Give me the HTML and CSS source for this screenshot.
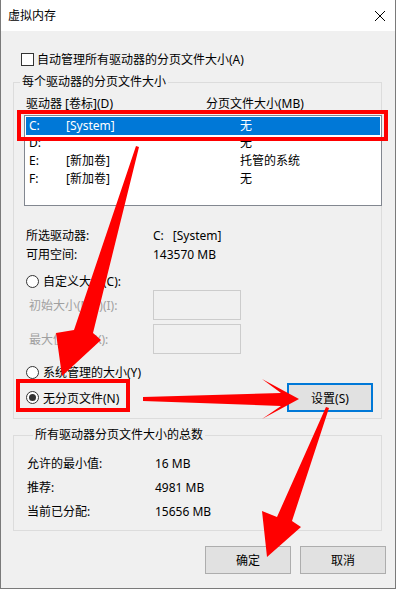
FILE: index.html
```html
<!DOCTYPE html>
<html lang="zh-CN">
<head>
<meta charset="utf-8">
<title>虚拟内存</title>
<link rel="stylesheet" href="styles.css">
</head>
<body>
<div class="window">
  <div class="titlebar">
    <span class="title">虚拟内存</span>
    <svg class="close" width="12" height="12" viewBox="0 0 12 12"><path d="M1 1L11 11M11 1L1 11" stroke="#000" stroke-width="1" fill="none"/></svg>
  </div>
  <div class="content">
    <div class="check-row"><span class="checkbox"></span><span>自动管理所有驱动器的分页文件大小(A)</span></div>

    <fieldset class="group group-drives">
      <legend>每个驱动器的分页文件大小</legend>
      <div class="list-header"><span class="hcol">驱动器 [卷标](D)</span><span>分页文件大小(MB)</span></div>
      <div class="listbox">
        <div class="lrow selected"><span class="c1">C:</span><span class="c2">[System]</span><span>无</span></div>
        <div class="lrow"><span class="c1">D:</span><span class="c2"></span><span>无</span></div>
        <div class="lrow"><span class="c1">E:</span><span class="c2">[新加卷]</span><span>托管的系统</span></div>
        <div class="lrow"><span class="c1">F:</span><span class="c2">[新加卷]</span><span>无</span></div>
      </div>
      <div class="info first"><span class="info-label">所选驱动器:</span><span>C:</span><span class="vol">[System]</span></div>
      <div class="info second"><span class="info-label">可用空间:</span><span>143570 MB</span></div>

      <div class="radio-row custom"><span class="radio"></span><span>自定义大小(C):</span></div>
      <div class="field-row"><span class="field-label">初始大小(MB)(I):</span><span class="field"></span></div>
      <div class="field-row second-field"><span class="field-label">最大值(MB)(X):</span><span class="field"></span></div>
      <div class="radio-row system"><span class="radio"></span><span>系统管理的大小(Y)</span></div>
      <div class="set-row"><span class="radio checked"></span><span>无分页文件(N)</span><span class="btn btn-focus">设置(S)</span></div>
    </fieldset>

    <fieldset class="group group-total">
      <legend>所有驱动器分页文件大小的总数</legend>
      <div class="trow"><span class="tlabel">允许的最小值:</span><span>16 MB</span></div>
      <div class="trow"><span class="tlabel">推荐:</span><span>4981 MB</span></div>
      <div class="trow"><span class="tlabel">当前已分配:</span><span>15656 MB</span></div>
    </fieldset>

    <div class="buttons"><span class="btn">确定</span><span class="btn">取消</span></div>
  </div>
</div>
<svg class="annot" width="396" height="589" viewBox="0 0 396 589">
  <rect x="19" y="112" width="367" height="27" fill="none" stroke="#ff0000" stroke-width="4"/>
  <rect x="18" y="381" width="110" height="29" fill="none" stroke="#ff0000" stroke-width="4"/>
  <polygon fill="#ff0000" points="136,146 139,147 93,333 101,340 62,376 56,333 74,330"/>
  <polygon fill="#ff0000" points="143,397 281,393 262,379 299,399 262,419 281,406 143,401"/>
  <polygon fill="#ff0000" points="326,407 329,408 292,521 301,527 267,557 262,511 277,517"/>
</svg>
</body>
</html>
```
FILE: styles.css
```css
* { box-sizing: border-box; }
html, body { margin: 0; padding: 0; }
body {
  position: relative;
  width: 396px;
  height: 589px;
  overflow: hidden;
  background: #ffffff;
  color: #000000;
  font-family: "Noto Sans", "Noto Sans CJK SC", sans-serif;
  font-size: 12px;
}
.window {
  width: 396px;
  height: 589px;
  display: flex;
  flex-direction: column;
  border: 1px solid #7a7a7a;
  border-top: none;
  background: #f0f0f0;
}
.titlebar {
  height: 31px;
  flex: none;
  display: flex;
  align-items: center;
  padding-left: 7px;
  background: #ffffff;
}
.title { line-height: 16px; }
.close { margin-left: auto; margin-right: 9px; }

.content {
  flex: 1;
  display: flex;
  flex-direction: column;
  padding: 22px 13px 0 12px;
}
.check-row {
  display: flex;
  align-items: center;
  height: 13px;
  margin-left: 8px;
  gap: 3px;
  line-height: 16px;
}
.checkbox {
  width: 13px;
  height: 13px;
  flex: none;
  border: 1px solid #333333;
  background: #ffffff;
}

.group {
  margin: 0;
  padding: 0;
  min-width: 0;
  border: 1px solid #dcdcdc;
}
.group legend {
  line-height: 16px;
  padding: 0 2px;
  margin-left: 6px;
}
.group-drives { margin-top: 8px; padding-bottom: 6px; }
.group-total { margin-top: 8px; padding: 12px 0 9px 13px; display: flex; flex-direction: column; gap: 6px; }

.list-header {
  margin-top: 6px;
  padding-left: 12px;
  line-height: 16px;
  display: flex;
}
.hcol { width: 180px; }
.listbox {
  margin: 3px -1px 0 10px;
  height: 91px;
  border: 1px solid #828790;
  background: #ffffff;
  padding: 1px;
}
.lrow {
  display: flex;
  align-items: center;
  height: 17.67px;
  padding-left: 3px;
  line-height: 16px;
}
.lrow.selected { background: #0078d7; color: #ffffff; }
.c1 { width: 37px; }
.c2 { width: 174px; }

.info {
  display: flex;
  padding-left: 12px;
  line-height: 18px;
}
.info.first { margin-top: 21px; }
.info.second { margin-top: 1px; }
.info-label { width: 127px; }
.vol { margin-left: 9px; }

.radio-row {
  display: flex;
  align-items: center;
  height: 18px;
  padding-left: 12px;
  gap: 4px;
}
.radio-row.custom { margin-top: 8px; }
.radio-row.system { margin-top: 9px; }
.radio {
  position: relative;
  width: 13px;
  height: 13px;
  flex: none;
  border: 1px solid #333333;
  border-radius: 50%;
  background: #ffffff;
}
.radio.checked::after {
  content: "";
  position: absolute;
  left: 2px;
  top: 2px;
  width: 7px;
  height: 7px;
  border-radius: 50%;
  background: #333333;
}
.field-row {
  display: flex;
  align-items: center;
  height: 30px;
  padding-left: 15px;
  color: #a0a0a0;
}
.field-row.second-field { margin-top: 4px; }
.field-label { width: 124px; }
.field {
  width: 88px;
  height: 30px;
  border: 1px solid #cccccc;
  background: #f0f0f0;
}
.set-row {
  display: flex;
  align-items: center;
  height: 29px;
  margin-top: 2px;
  padding-left: 12px;
  gap: 4px;
}
.btn {
  display: flex;
  align-items: center;
  justify-content: center;
  width: 86px;
  height: 28px;
  border: 1px solid #adadad;
  background: #e1e1e1;
}
.btn-focus {
  margin-left: auto;
  margin-right: 8px;
  height: 29px;
  border: 2px solid #0078d7;
}

.trow { display: flex; line-height: 18px; }
.tlabel { width: 128px; }

.buttons {
  display: flex;
  justify-content: flex-end;
  gap: 9px;
  margin-top: 15px;
  margin-right: -4px;
}

.annot {
  position: absolute;
  left: 0;
  top: 0;
  pointer-events: none;
}
```
